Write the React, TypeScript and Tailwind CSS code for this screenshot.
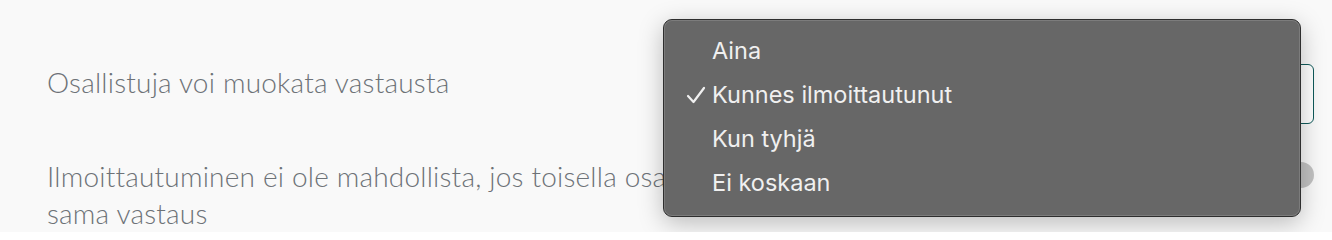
import React from "react";

export default function App() {
  const items = [
    { label: "Aina", checked: false },
    { label: "Kunnes ilmoittautunut", checked: true },
    { label: "Kun tyhjä", checked: false },
    { label: "Ei koskaan", checked: false },
  ];
  return (
    <div className="relative w-[1332px] h-[232px] overflow-hidden bg-[#f9f9f9]" style={{ fontFamily: "Lato, 'Noto Sans', sans-serif" }}>
      <div className="flex flex-col pl-[47px] pr-[18px]">
        <div className="flex items-start justify-between h-[60px] mt-[64px]">
          <span className="text-[28px] font-light text-[#6d7277] leading-[37px] tracking-[0.2px]">Osallistuja voi muokata vastausta</span>
          <div className="w-[380px] h-[60px] rounded-[6px] border border-[#0f5a5a] bg-white" />
        </div>
        <div className="flex items-start justify-between mt-[34px]">
          <span className="text-[28px] font-light text-[#6d7277] leading-[37px] tracking-[0.2px] w-[810px]">
            Ilmoittautuminen ei ole mahdollista, jos toisella osallistujalla on jo sama vastaus
          </span>
          <div className="w-[52px] h-[26px] mt-[4px] rounded-full bg-[#c2c2c2]" />
        </div>
      </div>

      <div
        className="absolute left-[663px] top-[19px] w-[638px] h-[198px] rounded-[9px] border border-[#2e2e2e] bg-[#676767] shadow-[0_6px_24px_rgba(0,0,0,0.25)] flex flex-col pt-[9px]"
        style={{ fontFamily: "Inter, 'Noto Sans', sans-serif" }}
      >
        <div className="absolute inset-0 rounded-[8px] border border-[#8a8a8a]/60 pointer-events-none" />
        {items.map((it) => (
          <div key={it.label} className="flex items-center h-[44px] text-[23.5px] text-[#f0f0f0] leading-none">
            <span className="w-[48px] flex justify-end pr-[6px]">
              {it.checked && (
                <svg width="20" height="18" viewBox="0 0 20 18" fill="none">
                  <path d="M2 10 L7.5 16 L18 2" stroke="#f0f0f0" strokeWidth="2.2" strokeLinecap="round" strokeLinejoin="round" />
                </svg>
              )}
            </span>
            <span>{it.label}</span>
          </div>
        ))}
      </div>
    </div>
  );
}
